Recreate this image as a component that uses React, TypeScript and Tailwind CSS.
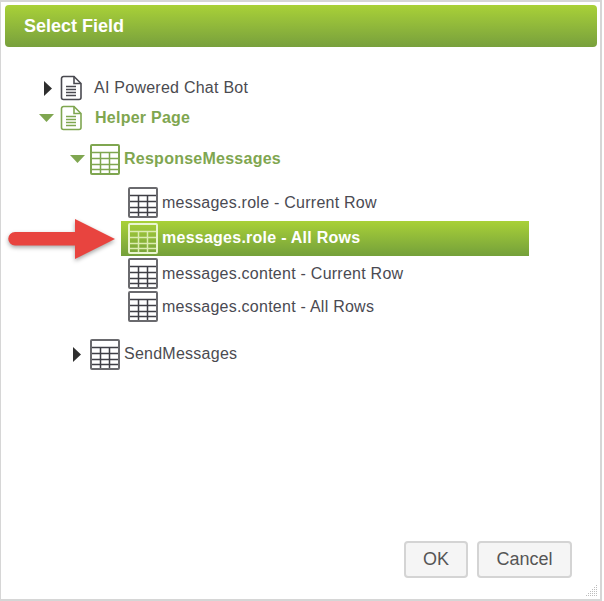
import React from 'react';

const PageIcon = ({ color }: { color: string }) => (
  <svg width="24" height="26" viewBox="0 0 24 26" fill="none" stroke={color} className="shrink-0">
    <path d="M2.5 3.5a2 2 0 0 1 2-2H15l7 7v14a2 2 0 0 1-2 2H4.500a2 2 0 0 1-2-2z" strokeWidth="1.600" />
    <path d="M15 1.500v7h7" strokeWidth="1.600" />
    <path d="M7 11.500h10M7 14.500h10M7 17.500h10M7 20.500h10" strokeWidth="1.300" />
  </svg>
);

const TableIcon = ({ color, inner }: { color: string; inner?: string }) => (
  <svg width="30" height="31" viewBox="0 0 30 31" fill="none" stroke={inner || color} className="shrink-0">
    <path d="M1 8.500h28M1 14.500h28M1 20.500h28M1 25.500h28" strokeWidth="1.500" />
    <path d="M10.500 8v22M19.500 8v22" strokeWidth="1.500" />
    <rect x="1" y="1" width="28" height="29" rx="1" stroke={color} strokeWidth="2" />
  </svg>
);

const Caret = ({ open, color }: { open?: boolean; color: string }) =>
  open ? (
    <svg width="15" height="8" viewBox="0 0 15 8" fill={color} className="shrink-0">
      <path d="M0 0h15L7.500 8z" />
    </svg>
  ) : (
    <svg width="8" height="15" viewBox="0 0 8 15" fill={color} className="shrink-0">
      <path d="M0 0l8 7.500L0 15z" />
    </svg>
  );

const green = '#7fa650';
const dark = '#4b4b50';

const ChildRow = ({ label, className }: { label: string; className: string }) => (
  <div className={`flex items-center gap-[4px] pl-[7px] w-[408px] text-[#4a4a52] ${className}`}>
    <TableIcon color="#6a6a6e" inner="#3f3f46" />
    <span>{label}</span>
  </div>
);

export default function App() {
  return (
    <div className="relative w-[602px] h-[601px] flex flex-col bg-white border-t-[2px] border-l-[1px] border-r-[2px] border-b-[2px] border-[#d6d6d6] font-['Liberation_Sans',Arial,sans-serif] overflow-hidden">
      <div className="ml-[4px] mr-[3px] mt-[3px] h-[42px] shrink-0 flex items-center pl-[19px] rounded-[4px] bg-gradient-to-b from-[#a9d137] to-[#78a03c] text-white text-[18px] font-bold">
        Select Field
      </div>

      <div className="flex flex-col pt-[26px] pl-[37px] text-[16px] tracking-[0.25px]">
        <div className="flex items-center h-[30px]" style={{ color: dark }}>
          <div className="w-[21px] pl-[6px]">
            <Caret color="#2f2f2f" />
          </div>
          <PageIcon color="#4a4a50" />
          <span className="ml-[11px]">AI Powered Chat Bot</span>
        </div>
        <div className="flex items-center h-[30px] font-bold" style={{ color: green }}>
          <div className="w-[21px] pl-[1px]">
            <Caret open color={green} />
          </div>
          <PageIcon color={green} />
          <span className="ml-[12px]">Helper Page</span>
        </div>

        <div className="flex items-center h-[30px] mt-[11px] pl-[32px] font-bold" style={{ color: green }}>
          <div className="w-[20px]">
            <Caret open color={green} />
          </div>
          <TableIcon color={green} />
          <span className="ml-[4px]">ResponseMessages</span>
        </div>

        <div className="flex flex-col pl-[83px] mt-[12px]">
          <ChildRow label="messages.role - Current Row" className="h-[33px] mb-[2px]" />
          <div className="flex items-center gap-[4px] pl-[7px] w-[408px] h-[35px] bg-gradient-to-b from-[#a9d137] to-[#74a03a] text-white font-bold">
            <TableIcon color="#eaf5cf" inner="#dcecb0" />
            <span className="mb-[1px]">messages.role - All Rows</span>
          </div>
          <ChildRow label="messages.content - Current Row" className="h-[33px] mt-[1px]" />
          <ChildRow label="messages.content - All Rows" className="h-[33px]" />
        </div>

        <div className="flex items-center h-[32px] mt-[15px] pl-[35px]" style={{ color: dark }}>
          <div className="w-[17px]">
            <Caret color="#2f2f2f" />
          </div>
          <TableIcon color="#6a6a6e" inner="#3f3f46" />
          <span className="ml-[4px]">SendMessages</span>
        </div>
      </div>

      <div className="mt-auto mb-[21px] mr-[28px] flex justify-end gap-[9px]">
        <button className="w-[64px] h-[37px] rounded-[4px] border-[2px] border-[#d4d4d4] bg-[#f5f5f5] text-[18px] text-[#555]">
          OK
        </button>
        <button className="w-[95px] h-[37px] rounded-[4px] border-[2px] border-[#d4d4d4] bg-[#f5f5f5] text-[18px] text-[#555]">
          Cancel
        </button>
      </div>

      {/* annotation arrow over the tree */}
      <svg width="112" height="46" viewBox="0 0 112 46" className="absolute left-[6px] top-[216px] drop-shadow-[0_2px_2px_rgba(0,0,0,0.35)]">
        <path d="M8 14h60V1l40 20-40 20V27.500H8a6.750 6.750 0 0 1 0-13.500z" fill="#e8443f" />
      </svg>

      {/* resize grip */}
      <svg width="14" height="14" viewBox="0 0 14 14" fill="#bdbdbd" className="absolute right-[2px] bottom-[1px]">
        <path d="M12 1h1v1h-1zM10 3h1v1h-1zM12 3h1v1h-1zM8 5h1v1H8zM10 5h1v1h-1zM12 5h1v1h-1zM6 7h1v1H6zM8 7h1v1H8zM10 7h1v1h-1zM12 7h1v1h-1zM4 9h1v1H4zM6 9h1v1H6zM8 9h1v1H8zM10 9h1v1h-1zM12 9h1v1h-1zM2 11h1v1H2zM4 11h1v1H4zM6 11h1v1H6zM8 11h1v1H8zM10 11h1v1h-1zM12 11h1v1h-1z" />
      </svg>
    </div>
  );
}
